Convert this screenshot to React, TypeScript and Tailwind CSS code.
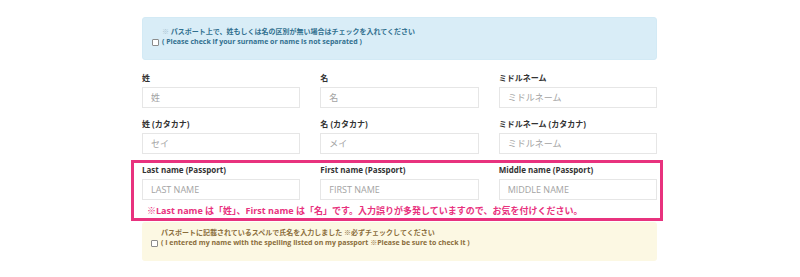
import React from 'react';

type FieldProps = {
  label: string;
  placeholder: string;
};

function Field({ label, placeholder }: FieldProps) {
  return (
    <div className="flex flex-col">
      <label className="text-[8px] leading-[12px] font-bold text-[#333333] mb-[3px]">{label}</label>
      <input
        type="text"
        placeholder={placeholder}
        className="h-[21px] w-full border border-[#e6e6e6] bg-white px-[8px] text-[9px] text-[#333333] placeholder:text-[#a3a3a3] outline-none"
      />
    </div>
  );
}

function Check() {
  return (
    <input
      type="checkbox"
      className="appearance-none w-[7px] h-[7px] border border-[#8c8c8c] rounded-[1px] bg-white shrink-0 mb-[1px]"
    />
  );
}

export default function App() {
  return (
    <div className="w-[800px] h-[277px] bg-white overflow-hidden font-['Open_Sans','Noto_Sans_CJK_JP',sans-serif]">
      <div className="ml-[142px] w-[515px] pt-[17px]">
        <div className="h-[43px] rounded-[3px] bg-[#d9edf7] border border-[#d3eaf5] pl-[9px] pb-[4px] flex items-center">
          <div className="flex items-end gap-[3px]">
            <Check />
            <div className="text-[7px] leading-[10px] font-bold text-[#31708f]">
              <div>
                <span className="text-[#a9c4d2]">※</span> パスポート上で、姓もしくは名の区別が無い場合はチェックを入れてください
              </div>
              <div>( Please check if your surname or name is not separated )</div>
            </div>
          </div>
        </div>

        <div className="grid grid-cols-3 gap-x-[20px] mt-[12px]">
          <Field label="姓" placeholder="姓" />
          <Field label="名" placeholder="名" />
          <Field label="ミドルネーム" placeholder="ミドルネーム" />
        </div>
        <div className="grid grid-cols-3 gap-x-[20px] mt-[10px]">
          <Field label="姓 (カタカナ)" placeholder="セイ" />
          <Field label="名 (カタカナ)" placeholder="メイ" />
          <Field label="ミドルネーム (カタカナ)" placeholder="ミドルネーム" />
        </div>

        <div className="mt-[6px] -ml-[11px] -mr-[6px] border-[3px] border-[#e8327e] pl-[8px] pr-[3px] pt-[1px] pb-[1px]">
          <div className="grid grid-cols-3 gap-x-[20px]">
            <Field label="Last name (Passport)" placeholder="LAST NAME" />
            <Field label="First name (Passport)" placeholder="FIRST NAME" />
            <Field label="Middle name (Passport)" placeholder="MIDDLE NAME" />
          </div>
          <p className="mt-[5px] pl-[5px] text-[9px] leading-[12px] font-bold text-[#e8327e]">
            ※Last name は「姓」、First name は「名」です。入力誤りが多発していますので、お気を付けください。
          </p>
        </div>

        <div className="mt-[1px] h-[39px] rounded-[3px] bg-[#fcf8e3] pl-[9px] pt-[6px]">
          <div className="flex items-end gap-[3px]">
            <Check />
            <div className="text-[7px] leading-[10px] font-bold text-[#8a6d3b]">
              <div>パスポートに記載されているスペルで氏名を入力しました ※必ずチェックしてください</div>
              <div>( I entered my name with the spelling listed on my passport ※Please be sure to check it )</div>
            </div>
          </div>
        </div>
      </div>
    </div>
  );
}
